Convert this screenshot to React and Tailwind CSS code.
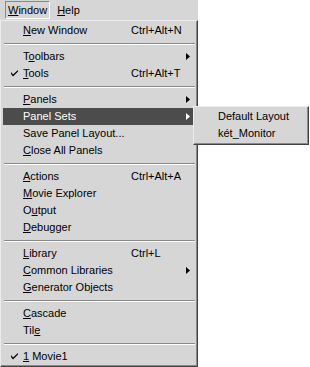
import React from "react";

const Arrow = ({ light }) => (
  <svg width="4" height="7" viewBox="0 0 4 7" className="block">
    <path d="M0 0 L4 3.5 L0 7 Z" fill={light ? "#ffffff" : "#000000"} />
  </svg>
);

const Check = () => (
  <svg width="7" height="7" viewBox="0 0 7 7" className="block">
    <path d="M0 2 L0 4 L2 6.5 L7 1.5 L7 0 L2 4.5 Z" fill="#000" />
  </svg>
);

// label with one underlined letter: [before, key, after]
const Label = ({ parts }) => (
  <span>
    {parts[0]}
    <u className="underline-offset-[1px]">{parts[1]}</u>
    {parts[2]}
  </span>
);

const items = [
  { parts: ["", "N", "ew Window"], key: "Ctrl+Alt+N" },
  "sep",
  { parts: ["T", "o", "olbars"], sub: true },
  { parts: ["", "T", "ools"], key: "Ctrl+Alt+T", check: true },
  "sep",
  { parts: ["", "P", "anels"], sub: true },
  { parts: ["Panel Sets", "", ""], sub: true, active: true },
  { parts: ["Save Panel Layout...", "", ""] },
  { parts: ["", "C", "lose All Panels"] },
  "sep",
  { parts: ["", "A", "ctions"], key: "Ctrl+Alt+A" },
  { parts: ["", "M", "ovie Explorer"] },
  { parts: ["O", "u", "tput"] },
  { parts: ["", "D", "ebugger"] },
  "sep",
  { parts: ["", "L", "ibrary"], key: "Ctrl+L" },
  { parts: ["", "C", "ommon Libraries"], sub: true },
  { parts: ["", "G", "enerator Objects"] },
  "sep",
  { parts: ["", "C", "ascade"] },
  { parts: ["Til", "e", ""] },
  "sep",
  { parts: ["", "1", " Movie1"], check: true },
];

const MenuItem = ({ item }) => (
  <div
    className={
      "flex items-center h-[17px] " +
      (item.active ? "bg-[#4c4c4c] text-white" : "text-black")
    }
  >
    <div className="w-[20px] flex justify-center pl-[2px]">{item.check && <Check />}</div>
    <div className="w-[108px] whitespace-nowrap">
      <Label parts={item.parts} />
    </div>
    <div className="flex-1 whitespace-nowrap">{item.key}</div>
    <div className="w-[10px]">{item.sub && <Arrow light={item.active} />}</div>
  </div>
);

const Separator = () => (
  <div className="h-[9px] flex flex-col justify-center px-[1px]">
    <div className="h-px bg-[#8a8a8a]" />
    <div className="h-px bg-white" />
  </div>
);

export default function App() {
  return (
    <div
      className="relative w-[310px] h-[367px] bg-white overflow-hidden text-[11px] leading-none"
      style={{ fontFamily: '"Liberation Sans", Arial, sans-serif' }}
    >
      {/* menu bar */}
      <div className="flex items-center h-[20px] w-[198px] bg-[#d6d6d6] pl-[5px] gap-[4px]">
        <div className="h-[18px] flex items-center px-[2px] border-t border-l border-[#8a8a8a] border-b border-r border-b-white border-r-white">
          <Label parts={["", "W", "indow"]} />
        </div>
        <div className="h-[18px] flex items-center px-[3px]">
          <Label parts={["", "H", "elp"]} />
        </div>
      </div>

      {/* window menu */}
      <div className="w-[198px] h-[347px] bg-[#d6d6d6] border-t border-l border-[#ececec] border-r border-b border-r-[#444] border-b-[#444]">
        <div className="h-full border-r border-b border-[#8a8a8a] pt-[1px] pl-[2px]">
          {items.map((it, i) =>
            it === "sep" ? <Separator key={i} /> : <MenuItem key={i} item={it} />
          )}
        </div>
      </div>

      {/* panel sets submenu */}
      <div className="absolute left-[193px] top-[106px] w-[116px] h-[39px] bg-[#d6d6d6] border-t border-l border-[#ececec] border-r border-b border-r-[#444] border-b-[#444]">
        <div className="h-full border-r border-b border-[#8a8a8a] pt-[1px] pl-[24px]">
          <div className="h-[17px] flex items-center">Default Layout</div>
          <div className="h-[17px] flex items-center">két_Monitor</div>
        </div>
      </div>
    </div>
  );
}
